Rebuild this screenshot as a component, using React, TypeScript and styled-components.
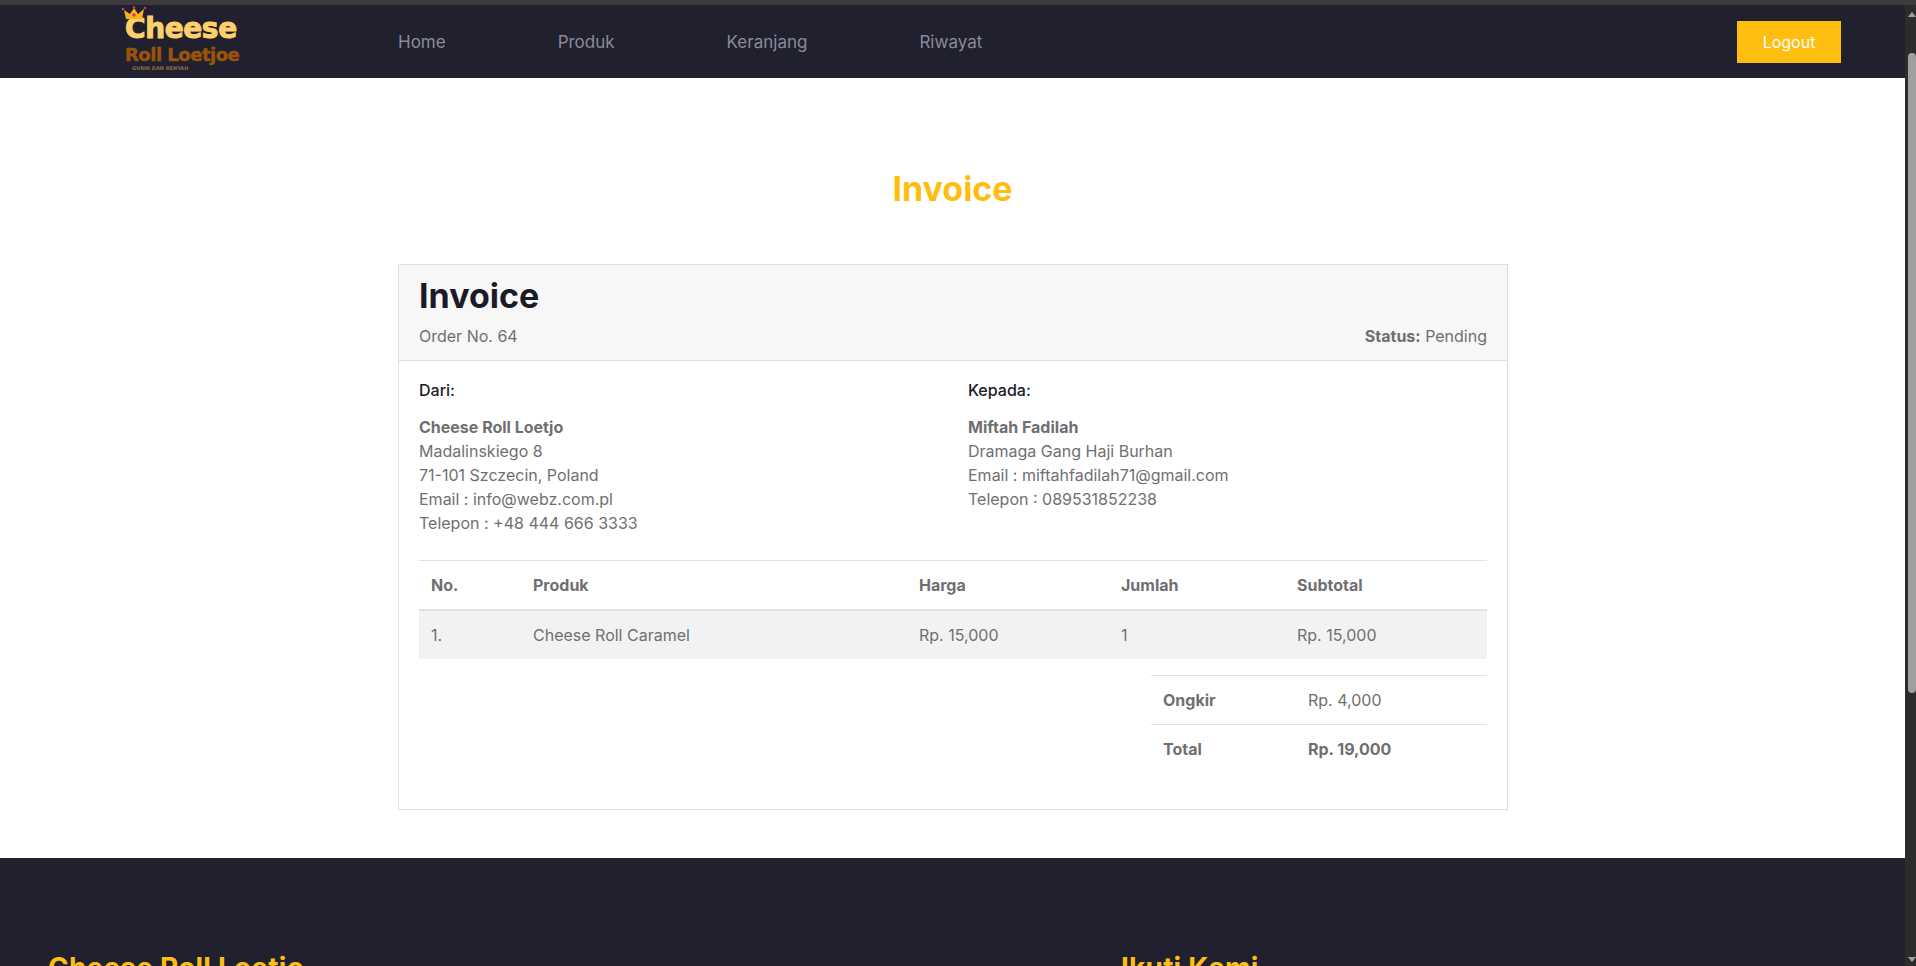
import styled, { createGlobalStyle } from "styled-components";

const GlobalStyle = createGlobalStyle`
  html, body {
    margin: 0;
    padding: 0;
    height: 966px;
    overflow: hidden;
    background: #3c3c3c;
  }
  * {
    box-sizing: border-box;
  }
  body {
    font-family: "Inter", "Liberation Sans", sans-serif;
    font-size: 16px;
    line-height: 24px;
    color: #6f6f72;
  }
`;

const navLinks = ["Home", "Produk", "Keranjang", "Riwayat"];

const products = [{ no: "1.", name: "Cheese Roll Caramel", price: "Rp. 15,000", qty: "1", subtotal: "Rp. 15,000" }];

const Logo = () => (
  <LogoBox>
    <Crown viewBox="0 0 26 14" aria-hidden="true">
      <path d="M5 13 L3 4 L9 8 L13 2 L17 8 L23 3 L21 13 Z" fill="#f4b41a" />
      <circle cx="13" cy="9" r="1.8" fill="#d6336c" />
      <circle cx="2" cy="3" r="1.3" fill="#d6336c" />
      <circle cx="13" cy="1.3" r="1.2" fill="#d6336c" />
      <circle cx="24" cy="2" r="1.3" fill="#d6336c" />
    </Crown>
    <LogoTop>Cheese</LogoTop>
    <LogoBottom>Roll Loetjoe</LogoBottom>
    <LogoTag>GURIH DAN RENYAH</LogoTag>
  </LogoBox>
);

const App = () => {
  return (
    <Screen>
      <GlobalStyle />
      <Page>
        <NavBar>
          <Logo />
          <NavLinks>
            {navLinks.map((link) => (
              <NavLink key={link}>{link}</NavLink>
            ))}
          </NavLinks>
          <LogoutButton>Logout</LogoutButton>
        </NavBar>

        <Main>
          <PageTitle>Invoice</PageTitle>
          <Card>
            <CardHeader>
              <CardTitle>Invoice</CardTitle>
              <HeaderRow>
                <span>Order No. 64</span>
                <span>
                  <b>Status:</b> Pending
                </span>
              </HeaderRow>
            </CardHeader>

            <CardBody>
              <Addresses>
                <div>
                  <AddressLabel>Dari:</AddressLabel>
                  <AddressText>
                    <b>Cheese Roll Loetjo</b>
                    <br />
                    Madalinskiego 8
                    <br />
                    71-101 Szczecin, Poland
                    <br />
                    Email : info@webz.com.pl
                    <br />
                    Telepon : +48 444 666 3333
                  </AddressText>
                </div>
                <div>
                  <AddressLabel>Kepada:</AddressLabel>
                  <AddressText>
                    <b>Miftah Fadilah</b>
                    <br />
                    Dramaga Gang Haji Burhan
                    <br />
                    Email : miftahfadilah71@gmail.com
                    <br />
                    Telepon : 089531852238
                  </AddressText>
                </div>
              </Addresses>

              <ProductTable>
                <thead>
                  <tr>
                    <HeadCell $width={102}>No.</HeadCell>
                    <HeadCell $width={386}>Produk</HeadCell>
                    <HeadCell $width={202}>Harga</HeadCell>
                    <HeadCell $width={176}>Jumlah</HeadCell>
                    <HeadCell>Subtotal</HeadCell>
                  </tr>
                </thead>
                <tbody>
                  {products.map((item) => (
                    <tr key={item.no}>
                      <BodyCell>{item.no}</BodyCell>
                      <BodyCell>{item.name}</BodyCell>
                      <BodyCell>{item.price}</BodyCell>
                      <BodyCell>{item.qty}</BodyCell>
                      <BodyCell>{item.subtotal}</BodyCell>
                    </tr>
                  ))}
                </tbody>
              </ProductTable>

              <SummaryTable>
                <tbody>
                  <tr>
                    <SummaryCell $width={145}>
                      <b>Ongkir</b>
                    </SummaryCell>
                    <SummaryCell>Rp. 4,000</SummaryCell>
                  </tr>
                  <tr>
                    <SummaryCell>
                      <b>Total</b>
                    </SummaryCell>
                    <SummaryCell>
                      <b>Rp. 19,000</b>
                    </SummaryCell>
                  </tr>
                </tbody>
              </SummaryTable>
            </CardBody>
          </Card>
        </Main>

        <Footer>
          <FooterTitle>Cheese Roll Loetjo</FooterTitle>
          <FooterTitle>Ikuti Kami</FooterTitle>
        </Footer>
      </Page>
      <Scrollbar>
        <ScrollArrow />
        <ScrollThumb />
        <ScrollArrowDown />
      </Scrollbar>
    </Screen>
  );
};

export default App;

const Screen = styled.div`
  display: flex;
  height: 961px;
  margin-top: 5px;
  overflow: hidden;
`;

const Page = styled.div`
  flex: 1;
  min-width: 0;
  background: #fff;
  overflow: hidden;
`;

const NavBar = styled.header`
  display: flex;
  align-items: center;
  height: 73px;
  padding: 0 64px 0 122px;
  background: #20202e;
`;

const LogoBox = styled.div`
  position: relative;
  width: 116px;
  height: 73px;
  padding: 7px 0 0 3px;
  font-family: "DejaVu Sans", sans-serif;
  font-weight: 700;
  line-height: 1;
  white-space: nowrap;
`;

const Crown = styled.svg`
  position: absolute;
  top: 1px;
  left: -1px;
  width: 26px;
  height: 14px;
`;

const LogoTop = styled.div`
  font-size: 28px;
  line-height: 33px;
  color: #fdd06b;
  letter-spacing: -0.4px;
  -webkit-text-stroke: 1px #fdd06b;
`;

const LogoBottom = styled.div`
  font-size: 18px;
  line-height: 20px;
  color: #99540a;
  letter-spacing: -0.5px;
  -webkit-text-stroke: 0.5px #99540a;
`;

const LogoTag = styled.div`
  padding-left: 7px;
  font-size: 5px;
  line-height: 6px;
  color: #8a6a50;
`;

const NavLinks = styled.nav`
  display: flex;
  gap: 112px;
  margin-left: 160px;
`;

const NavLink = styled.a`
  font-size: 17px;
  color: #8b8b99;
`;

const LogoutButton = styled.button`
  width: 104px;
  height: 42px;
  margin-left: auto;
  border: 0;
  background: #febe10;
  color: #fff;
  font-family: inherit;
  font-size: 16px;
`;

const Main = styled.main`
  padding: 87px 0 48px;
`;

const PageTitle = styled.h2`
  margin: 0 0 51px;
  font-size: 34px;
  line-height: 48px;
  font-weight: 700;
  text-align: center;
  color: #febe10;
`;

const Card = styled.section`
  width: 1110px;
  height: 546px;
  margin-left: 398px;
  border: 1px solid #dfdfdf;
`;

const CardHeader = styled.div`
  height: 96px;
  padding: 11px 20px 0;
  background: #f7f7f7;
  border-bottom: 1px solid #dfdfdf;
`;

const CardTitle = styled.h1`
  margin: 0 0 8px;
  font-size: 34px;
  line-height: 40px;
  font-weight: 700;
  color: #1a1a28;
`;

const HeaderRow = styled.div`
  display: flex;
  justify-content: space-between;
`;

const CardBody = styled.div`
  padding: 17px 20px 16px;
`;

const Addresses = styled.div`
  display: grid;
  grid-template-columns: 549px 1fr;
  height: 183px;
  border-bottom: 1px solid #dee2e6;
`;

const AddressLabel = styled.h6`
  margin: 0 0 13px;
  font-size: 16px;
  line-height: 24px;
  font-weight: 500;
  color: #1a1a28;
`;

const AddressText = styled.div`
  line-height: 24px;
`;

const ProductTable = styled.table`
  width: 100%;
  border-collapse: collapse;
  table-layout: fixed;
`;

const HeadCell = styled.th<{ $width?: number }>`
  width: ${(p) => (p.$width ? `${p.$width}px` : "auto")};
  height: 49px;
  padding: 0 12px;
  text-align: left;
  font-weight: 700;
  border-bottom: 2px solid #dee2e6;
`;

const BodyCell = styled.td`
  height: 49px;
  padding: 0 12px;
  background: #f2f2f2;
`;

const SummaryTable = styled.table`
  width: 336px;
  margin: 16px 0 0 auto;
  border-collapse: collapse;
  table-layout: fixed;
`;

const SummaryCell = styled.td<{ $width?: number }>`
  width: ${(p) => (p.$width ? `${p.$width}px` : "auto")};
  height: 49px;
  padding: 0 12px;
  border-top: 1px solid #dee2e6;
`;

const Footer = styled.footer`
  display: grid;
  grid-template-columns: 1073px 1fr;
  height: 200px;
  padding: 92px 0 0 48px;
  background: #20202e;
`;

const FooterTitle = styled.h3`
  margin: 0;
  font-size: 28px;
  line-height: 36px;
  font-weight: 700;
  letter-spacing: 0.2px;
  color: #febe10;
`;

const Scrollbar = styled.div`
  position: relative;
  flex: none;
  width: 11px;
  background: #2c2c2c;
`;

const ScrollArrow = styled.div`
  position: absolute;
  top: 7px;
  left: 3px;
  width: 0;
  height: 0;
  border-left: 4px solid transparent;
  border-right: 4px solid transparent;
  border-bottom: 5px solid #a0a0a0;
`;

const ScrollThumb = styled.div`
  position: absolute;
  top: 48px;
  left: 3px;
  width: 8px;
  height: 640px;
  border-radius: 4px;
  background: #9f9f9f;
`;

const ScrollArrowDown = styled.div`
  position: absolute;
  bottom: 4px;
  left: 3px;
  width: 0;
  height: 0;
  border-left: 4px solid transparent;
  border-right: 4px solid transparent;
  border-top: 5px solid #a0a0a0;
`;
